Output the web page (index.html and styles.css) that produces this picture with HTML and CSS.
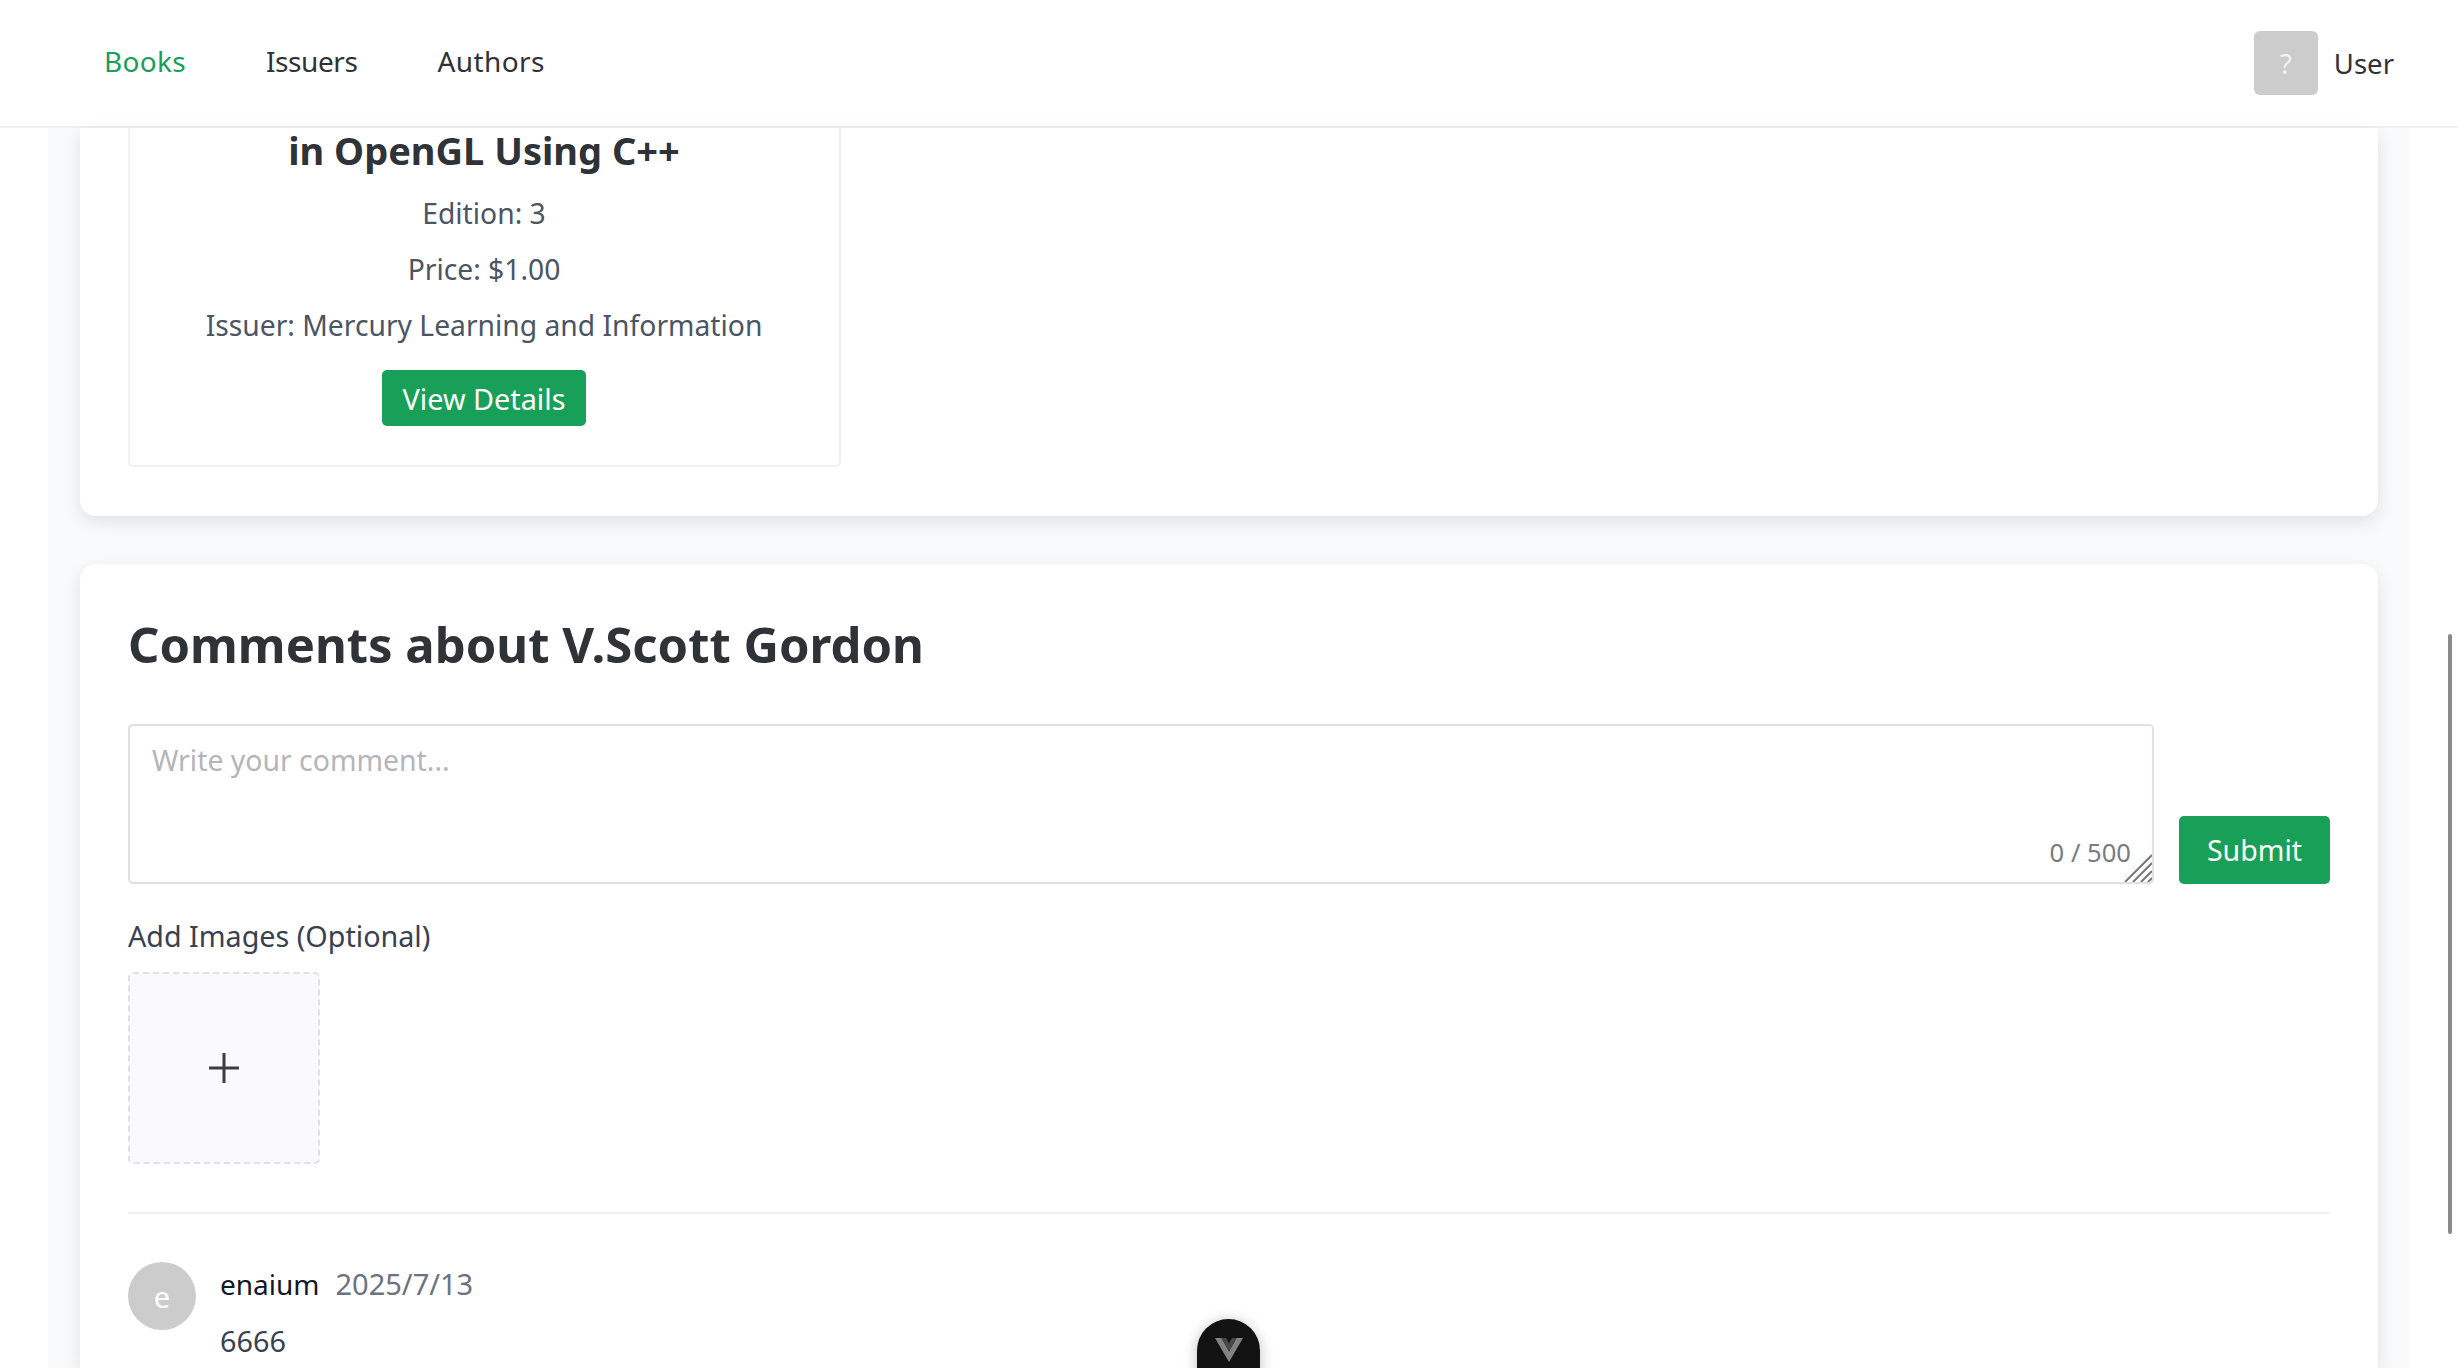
FILE: index.html
```html
<!DOCTYPE html>
<html lang="en">
<head>
    <meta charset="UTF-8">
    <meta name="viewport" content="width=device-width, initial-scale=1.0">
    <title>V.Scott Gordon</title>
    <link rel="stylesheet" href="styles.css">
</head>
<body>
    <header class="topbar">
        <nav class="nav">
            <a class="nav-link active" href="#">Books</a>
            <a class="nav-link" href="#">Issuers</a>
            <a class="nav-link" href="#">Authors</a>
        </nav>
        <div class="user">
            <div class="user-avatar">?</div>
            <span class="user-name">User</span>
        </div>
    </header>

    <main class="main">
        <section class="card card-books">
            <div class="book">
                <h3 class="book-title">in OpenGL Using C++</h3>
                <p class="book-line">Edition: 3</p>
                <p class="book-line">Price: $1.00</p>
                <p class="book-line">Issuer: Mercury Learning and Information</p>
                <a class="btn btn-small" href="#">View Details</a>
            </div>
        </section>

        <section class="card card-comments">
            <h2 class="comments-title">Comments about V.Scott Gordon</h2>
            <div class="comment-form">
                <div class="textarea">
                    <span class="placeholder">Write your comment...</span>
                    <span class="counter">0 / 500</span>
                    <svg class="resizer" width="28" height="28" viewBox="0 0 28 28">
                        <path d="M1 28 28 1M9 28 28 9M17 28 28 17M24 28 28 24" stroke="#777" stroke-width="2" fill="none"/>
                    </svg>
                </div>
                <button class="btn btn-submit">Submit</button>
            </div>
            <div class="upload-label">Add Images (Optional)</div>
            <div class="upload-box">
                <svg width="30" height="30" viewBox="0 0 30 30">
                    <path d="M0 15H30M15 0V30" stroke="#3a3d42" stroke-width="3" fill="none"/>
                </svg>
            </div>
            <hr class="divider">
            <div class="comment">
                <div class="comment-avatar">e</div>
                <div class="comment-body">
                    <div class="comment-meta">
                        <span class="comment-author">enaium</span>
                        <span class="comment-date">2025/7/13</span>
                    </div>
                    <p class="comment-text">6666</p>
                </div>
            </div>
        </section>
    </main>

    <div class="scroll-thumb"></div>
    <div class="devtools">
        <svg width="28" height="24" viewBox="0 0 28 24">
            <path d="M0 0H6.5L14 13.5 21.5 0H28L14 24Z" fill="#828282"/>
            <path d="M6.5 0H11L14 5 17 0H21.5L14 13.5Z" fill="#484848"/>
        </svg>
    </div>
</body>
</html>
```

FILE: styles.css
```css
* {
    box-sizing: border-box;
}
html, body {
    height: 100%;
}
body {
    margin: 0;
    height: 1368px;
    overflow: hidden;
    background-color: #fff;
    color: #2f3237;
    font-family: "Noto Sans", Arial, sans-serif;
    font-size: 28px;
}
a {
    text-decoration: none;
}
p, h2, h3 {
    margin: 0;
}

.topbar {
    height: 128px;
    display: flex;
    align-items: center;
    justify-content: space-between;
    padding: 0 64px 0 104px;
    background-color: #fff;
    border-bottom: 2px solid #efeff5;
}
.nav {
    display: flex;
    gap: 80px;
    margin-top: -4px;
}
.nav-link {
    color: #2f3237;
    font-size: 28px;
    line-height: 38px;
}
.nav-link:nth-child(1) {
    letter-spacing: 0.3px;
}
.nav-link:nth-child(2) {
    letter-spacing: -0.4px;
}
.nav-link:nth-child(3) {
    letter-spacing: 0.4px;
}
.nav-link.active {
    color: #18a058;
}
.user {
    display: flex;
    align-items: center;
    gap: 16px;
}
.user-avatar {
    width: 64px;
    height: 64px;
    display: flex;
    align-items: center;
    justify-content: center;
    background-color: #ccc;
    border-radius: 6px;
    color: #f2f2f2;
    font-size: 28px;
}
.user-name {
    margin-top: 2px;
    font-size: 27.5px;
    line-height: 38px;
}

.main {
    margin: 0 48px;
    padding: 0 32px;
    height: 1240px;
    background-color: #f9fafb;
}
.card {
    background-color: #fff;
    padding: 0 48px;
    box-shadow: 0 6px 18px rgba(0, 0, 0, 0.1);
}
.card-books {
    height: 388px;
    border-radius: 0 0 16px 16px;
}
.card-comments {
    margin-top: 48px;
    border-radius: 16px 16px 0 0;
    padding-top: 48px;
    height: 804px;
}

.book {
    width: 713px;
    height: 339px;
    padding-right: 1px;
    text-align: center;
    border: 2px solid #efeff5;
    border-top: none;
    border-radius: 0 0 5px 5px;
}
.book-title {
    font-size: 38px;
    line-height: 44px;
    font-weight: 700;
    margin-bottom: 21px;
}
.book-line {
    color: #4b5563;
    font-size: 28.25px;
    line-height: 40px;
    margin-bottom: 16px;
}
.btn {
    display: inline-flex;
    align-items: center;
    justify-content: center;
    background-color: #18a058;
    color: #fff;
    border: none;
    border-radius: 5px;
    font-family: inherit;
}
.btn-small {
    width: 204px;
    height: 56px;
    margin-top: 9px;
    font-size: 28.8px;
}
.btn-submit {
    width: 151px;
    height: 68px;
    font-size: 28.5px;
    flex-shrink: 0;
}

.comments-title {
    font-size: 49px;
    line-height: 64px;
    font-weight: 700;
    margin-bottom: 48px;
}
.comment-form {
    display: flex;
    align-items: flex-end;
    gap: 25px;
}
.textarea {
    position: relative;
    flex: 1;
    height: 160px;
    padding: 15px 22px;
    border: 2px solid #e0e0e6;
    border-radius: 5px;
}
.placeholder {
    color: #b5b5b9;
    font-size: 28.4px;
    line-height: 38px;
}
.counter {
    position: absolute;
    right: 21px;
    bottom: 13px;
    color: #767c82;
    font-size: 25.6px;
    line-height: 32px;
}
.resizer {
    position: absolute;
    right: 0;
    bottom: 0;
}
.upload-label {
    margin-top: 32px;
    color: #374151;
    font-size: 28.7px;
    line-height: 40px;
}
.upload-box {
    width: 192px;
    height: 192px;
    margin-top: 16px;
    display: flex;
    align-items: center;
    justify-content: center;
    background-color: #fafafc;
    border: 2px dashed #e0e0e6;
    border-radius: 5px;
}
.divider {
    height: 2px;
    margin: 48px 0;
    border: none;
    background-color: #efeff5;
}
.comment {
    display: flex;
    gap: 24px;
}
.comment-avatar {
    width: 68px;
    height: 68px;
    display: flex;
    align-items: center;
    justify-content: center;
    background-color: #ccc;
    border-radius: 50%;
    color: #fff;
    font-size: 29px;
}
.comment-body {
    padding-top: 2px;
}
.comment-meta {
    display: flex;
    align-items: center;
    gap: 16px;
}
.comment-author {
    color: #111827;
    font-size: 28px;
    line-height: 40px;
}
.comment-date {
    color: #6b7280;
    font-size: 29px;
    line-height: 40px;
}
.comment-text {
    color: #374151;
    font-size: 28.8px;
    line-height: 40px;
    margin-top: 17px;
}

/* overlay bits */
.scroll-thumb {
    position: absolute;
    left: 2448px;
    top: 634px;
    width: 4px;
    height: 600px;
    background-color: #8a8a8a;
    border-radius: 2px;
}
.devtools {
    position: absolute;
    left: 1197px;
    top: 1319px;
    width: 63px;
    height: 90px;
    padding-top: 19px;
    display: flex;
    justify-content: center;
    align-items: flex-start;
    background-color: #121212;
    border-radius: 32px;
    box-shadow: 0 2px 14px rgba(0, 0, 0, 0.25);
}
```
